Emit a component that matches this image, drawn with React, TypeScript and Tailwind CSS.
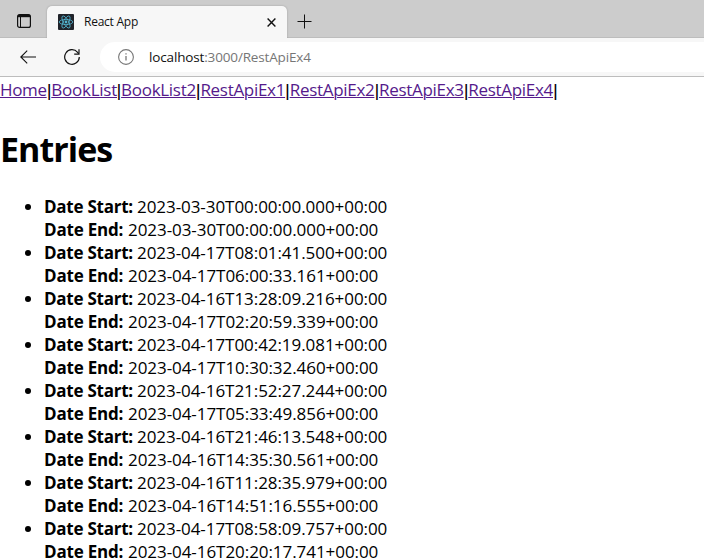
const links = [
  { label: "Home", width: "w-[47px] tracking-[-0.35px]" },
  { label: "BookList", width: "w-[65.5px] tracking-[-0.25px]" },
  { label: "BookList2", width: "w-[75px] tracking-[-0.3px]" },
  { label: "RestApiEx1", width: "w-[85px] tracking-[-0.3px]" },
  { label: "RestApiEx2", width: "w-[85px] tracking-[-0.3px]" },
  { label: "RestApiEx3", width: "w-[85px] tracking-[-0.3px]" },
  { label: "RestApiEx4", width: "w-[85px] tracking-[-0.3px]" },
];

const entries = [
  ["2023-03-30T00:00:00.000+00:00", "2023-03-30T00:00:00.000+00:00"],
  ["2023-04-17T08:01:41.500+00:00", "2023-04-17T06:00:33.161+00:00"],
  ["2023-04-16T13:28:09.216+00:00", "2023-04-17T02:20:59.339+00:00"],
  ["2023-04-17T00:42:19.081+00:00", "2023-04-17T10:30:32.460+00:00"],
  ["2023-04-16T21:52:27.244+00:00", "2023-04-17T05:33:49.856+00:00"],
  ["2023-04-16T21:46:13.548+00:00", "2023-04-16T14:35:30.561+00:00"],
  ["2023-04-16T11:28:35.979+00:00", "2023-04-16T14:51:16.555+00:00"],
  ["2023-04-17T08:58:09.757+00:00", "2023-04-16T20:20:17.741+00:00"],
];

function ReactLogo() {
  return (
    <svg className="h-4 w-4 shrink-0" viewBox="0 0 16 16" fill="none">
      <rect width="16" height="16" rx="1" fill="#20232a" />
      <g stroke="#53b5d0" strokeWidth="0.8">
        <ellipse cx="8" cy="8" rx="6.8" ry="2.6" />
        <ellipse cx="8" cy="8" rx="6.8" ry="2.6" transform="rotate(60 8 8)" />
        <ellipse cx="8" cy="8" rx="6.8" ry="2.6" transform="rotate(120 8 8)" />
      </g>
      <circle cx="8" cy="8" r="1.4" fill="#53b5d0" />
    </svg>
  );
}

function TabStrip() {
  return (
    <div className="flex h-[38px] items-end border-b border-[#bdbdbd] bg-[#cccccc]">
      <div className="flex h-8 w-[47px] items-center pl-[17px]">
        <svg className="h-[14px] w-[14px]" viewBox="0 0 14 14" fill="none" stroke="#111">
          <rect x="0.6" y="0.6" width="12.8" height="12.8" rx="2" strokeWidth="1.2" />
          <path d="M1 2h12" strokeWidth="2.4" />
          <path d="M3.5 3v10" strokeWidth="1" />
        </svg>
      </div>
      <div className="-mb-px flex h-8 w-[240px] items-center rounded-t-[5px] bg-[#f7f7f7] pl-[11px] pr-[11px] shadow-[0_0_2px_rgba(0,0,0,0.25)] [clip-path:inset(-3px_-3px_0_-3px)]">
        <ReactLogo />
        <span className="ml-[10px] whitespace-nowrap text-[12px] leading-4 tracking-[-0.25px] text-[#111]">React App</span>
        <svg className="ml-auto h-[9px] w-[9px]" viewBox="0 0 9 9" fill="none" stroke="#111" strokeWidth="1.4">
          <path d="M0.6 0.6l7.8 7.8M8.4 0.6L0.6 8.4" />
        </svg>
      </div>
      <div className="flex h-8 items-center pl-[10px]">
        <svg className="h-[15px] w-[15px]" viewBox="0 0 15 15" fill="none" stroke="#111" strokeWidth="1">
          <path d="M7.5 0.5v14M0.5 7.5h14" />
        </svg>
      </div>
    </div>
  );
}

function Toolbar() {
  return (
    <div className="flex h-[39px] items-center border-b border-[#bdbdbd] bg-[#f7f7f7]">
      <svg className="ml-5 h-[14px] w-4 shrink-0" viewBox="0 0 16 14" fill="none" stroke="#111" strokeWidth="1.1">
        <path d="M16 7H0.8M7.2 0.6L0.8 7l6.4 6.4" />
      </svg>
      <svg className="ml-7 h-4 w-4 shrink-0" viewBox="0 0 16 16" fill="none" stroke="#111" strokeWidth="1.2">
        <path d="M15.3 8A7.3 7.3 0 1 1 13.6 3.3L14.6 4.6" />
        <path d="M15 0.3v4.8h-4.8" />
      </svg>
      <div className="ml-5 flex h-[30px] flex-1 items-center rounded-l-full bg-white pl-[18px]">
        <svg className="h-4 w-4 shrink-0" viewBox="0 0 16 16" fill="none" stroke="#777">
          <circle cx="8" cy="8" r="7.4" strokeWidth="1.1" />
          <path d="M8 7v4.5M8 4.2v1.4" strokeWidth="1.3" />
        </svg>
        <span className="ml-[15px] whitespace-nowrap text-[13.5px] leading-5 tracking-[-0.15px] text-[#767676]">
          <span className="text-[#111]">localhost</span>:3000/RestApiEx4
        </span>
      </div>
    </div>
  );
}

export default function App() {
  return (
    <div className="h-[558px] w-[704px] overflow-hidden bg-white font-['Open_Sans','Noto_Sans',sans-serif] text-black">
      <TabStrip />
      <Toolbar />
      <nav className="flex h-[25px] text-[17px] leading-[25px]">
        {links.map(({ label, width }) => (
          <div key={label} className="flex">
            <a className={`${width} whitespace-nowrap text-[#551a8b] underline decoration-1 underline-offset-1`}>{label}</a>
            <span className="flex w-[4.3px] justify-center font-semibold">|</span>
          </div>
        ))}
      </nav>
      <h1 className="mt-[23px] h-[48px] text-[34px] font-bold leading-[48px] tracking-[-0.95px]">Entries</h1>
      <ul className="mt-[22px] list-disc pl-[44px] text-[17px] leading-[23px]">
        {entries.map(([start, end]) => (
          <li key={start}>
            <div className="flex h-[23px] whitespace-nowrap">
              <b className="w-[93px] tracking-[-0.25px]">Date Start:</b>
              <span className="tracking-[-0.06px]">{start}</span>
            </div>
            <div className="flex h-[23px] whitespace-nowrap">
              <b className="w-[84px] tracking-[-0.2px]">Date End:</b>
              <span className="tracking-[-0.06px]">{end}</span>
            </div>
          </li>
        ))}
      </ul>
    </div>
  );
}
